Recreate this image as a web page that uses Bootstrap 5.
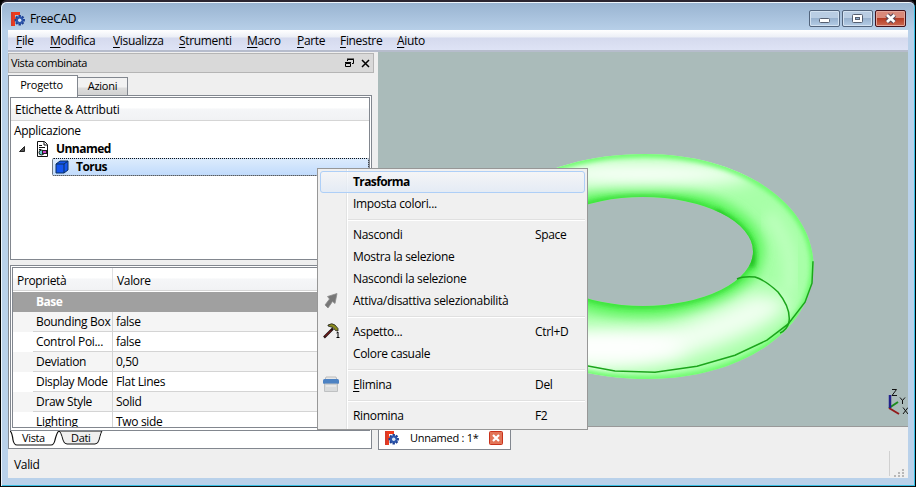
<!DOCTYPE html>
<html lang="it">
<head>
<meta charset="utf-8">
<title>FreeCAD</title>
<link href="https://cdn.jsdelivr.net/npm/bootstrap@5.3.0/dist/css/bootstrap.min.css" rel="stylesheet">
<style>
*{box-sizing:border-box}
html,body{margin:0;height:487px;overflow:hidden;background:#000}
body{font:12px/16px "Open Sans","Noto Sans",sans-serif;letter-spacing:-.33px;color:#000;white-space:nowrap}
svg{display:block;flex:none}
u{text-underline-offset:2px;text-decoration-thickness:1px}
.win{width:916px;height:487px;border:1px solid #000;border-top:2px solid #2b2530;border-bottom-color:#111;border-radius:7px 7px 0 0;background:#b9d1ea;box-shadow:inset 1px 1px #eef5fc,inset -1px -1px #37bfe4;padding:0 7px 7px}
.titlebar{height:27px;margin:1px -6px 0;padding:0 8px 0 8px;background:linear-gradient(#99b4d1,#b7cfe8);border-radius:5px 5px 0 0}
.titlebar .cap{margin-left:4px;padding-top:4px}
.fw-bold{letter-spacing:-.55px}
.wbtn{width:31px;height:17px;border:1px solid #52647c;border-radius:2px;box-shadow:inset 0 0 0 1px #d3e2f1;background:linear-gradient(#b9cde3 48%,#98b2cf 50%,#b5cde6);margin-left:2px}
.wbtn.x{border-color:#43101a;box-shadow:inset 0 0 0 1px #e3a69b;background:linear-gradient(#d9897a 48%,#b53b24 50%,#cc6a52)}
.client{height:448px;background:#efefef}
.menus{height:22px;background:linear-gradient(#fff 0,#eceff6 7px,#d5daee 8px,#dee3f5 20px);border-bottom:2px solid #b6bccc;gap:0}
.menus span{display:block;line-height:20px;padding-top:1px}
.left{width:370px;height:398px;padding-top:1px}
.docktitle{width:366px;height:20px;border:1px solid #b5b5b5;background:#d9d9d9;padding:0 0 0 2px;font-size:11px;letter-spacing:-.4px}
.tabrow{height:24px;padding-top:2px;width:364px}
.ptab{border:1px solid #82878f;border-bottom:0;font-size:11px;text-align:center}
.ptab.on{width:70px;height:22px;background:#fff;line-height:18px;letter-spacing:-.2px;padding-right:3px}
.ptab.off{width:51px;height:20px;margin:2px 0 0 -1px;background:linear-gradient(#f2f2f2 45%,#dcdcdc 55%,#cfcfcf);line-height:16px;letter-spacing:-.25px}
.pane{width:364px;height:354px;margin-top:-2px;background:#fff;border:1px solid #82878f;padding:1px;position:relative}
.treebox{width:360px;height:163px;border:1px solid #82878f;background:#fff}
.thead1{height:23px;background:linear-gradient(#fff 45%,#f5f6f8 50%,#f1f2f4);border-bottom:1px solid #d5d5d5;padding:4px 0 0 4px;letter-spacing:-.27px;margin-bottom:1px}
.trow{height:18px;line-height:18px}
.selrow{height:18px;margin-left:41px;border:1px dotted #111;border-radius:2px;background:linear-gradient(#dcebfc,#c1dbfc);line-height:16px;width:317px}
.gapbar{height:5px;background:#efefef}
.propouter{height:166px;border:1px solid #82878f;background:#fff;padding:1px}
.propinner{height:161px;border:1px solid #82878f;overflow:hidden}
.phead{height:23px;background:linear-gradient(#fff 45%,#f5f6f8 50%,#f1f2f4);border-bottom:1px solid #d5d5d5}
.phead .c1{width:100px;border-right:1px solid #dfe0e2;padding:5px 0 0 4px}
.phead .c2{padding:5px 0 0 4px}
.pbase{height:20px;margin-top:1px;background:#a0a0a0;color:#fff;font-weight:700;padding-left:23px;line-height:20px;letter-spacing:-.5px}
.prow{height:20px;line-height:20px}
.prow.alt{background:#f5f5f5}
.prow .ind{width:20px}
.prow .k{width:80px;padding-left:3px;border-right:1px solid #d4d4d4;border-bottom:1px solid #d4d4d4;overflow:hidden}
.prow .v{padding-left:3px;border-bottom:1px solid #d4d4d4}
.ftabs{height:17px}
.view{width:530px;height:375px;background:#aabbba;border-bottom:1px solid #999}
.mditab{width:133px;height:23px;background:#fff;border:1px solid #82878f;border-top:0;padding:0 12px 0 6px;font-size:11px;letter-spacing:-.25px}
.status{height:28px;padding-left:6px;line-height:30px}
.ctx{position:absolute;left:317px;top:168px;width:271px;height:262px;border:1px solid #979797;border-radius:0;background:linear-gradient(90deg,#f0f0f0 28px,#e2e3e3 28px,#e2e3e3 29px,#fff 29px,#fff 30px,#f0f0f0 30px);padding:2px;margin:0;min-width:0;font-size:12px;color:#000;box-shadow:none;display:block}
.ctx .it{height:22px;line-height:19px;border:1px solid transparent}
.ctx .hot{border:1px solid #aecff7;border-radius:3px;background:linear-gradient(rgba(247,248,250,.6),rgba(225,234,246,.8));font-weight:700;line-height:20px;letter-spacing:-.62px}
.ctx .ic{width:32px;height:20px;padding-left:2px}
.ctx .lab{width:182px}
.ctx .sp{height:9px;padding:4px 0 0 28px}
.ctx .sp div{height:2px;background:#e0e0e0;border-bottom:1px solid #fff}
</style>
<script src="https://cdn.jsdelivr.net/npm/bootstrap@5.3.0/dist/js/bootstrap.bundle.min.js"></script>
</head>
<body>
<svg width="0" height="0" class="position-absolute">
 <symbol id="fc" viewBox="0 0 16 16">
  <path d="M1 1h9v3H5v3h3v3H5v5H1z" fill="#ee3b1c"/>
  <path d="M1 1h2v14H1z" fill="#d63a2a"/>
  <g stroke="#1d3f93" stroke-width="2.4"><path d="M9.700 4v10.400M4.500 9.200h10.400M6 5.500l7.400 7.400M13.400 5.500L6 12.900"/></g>
  <circle cx="9.700" cy="9.200" r="3.600" fill="#2c56ad"/><circle cx="9.700" cy="9.200" r="1.700" fill="#dbe6f5"/>
 </symbol>
</svg>
<div class="win">
 <header class="titlebar d-flex">
  <svg width="16" height="16" class="mt-2"><use href="#fc"/></svg>
  <span class="cap align-self-center">FreeCAD</span>
  <div class="ms-auto d-flex" style="padding-top:7px">
   <div class="wbtn"><svg width="29" height="15"><rect x="9.500" y="7.500" width="10" height="4" rx="1" fill="#fff" stroke="#555f70"/></svg></div>
   <div class="wbtn"><svg width="29" height="15"><rect x="9.500" y="3.500" width="10" height="8" rx="1" fill="#fff" stroke="#555f70"/><rect x="12.500" y="6.500" width="4" height="2" fill="#8fadd0" stroke="#555f70"/></svg></div>
   <div class="wbtn x"><svg width="29" height="15"><path d="M11 4l7.500 7M18.500 4L11 11" stroke="#5b4a59" stroke-width="5"/><path d="M11 4l7.500 7M18.500 4L11 11" stroke="#fff" stroke-width="2.700"/></svg></div>
  </div>
 </header>
 <div class="client">
  <nav class="menus d-flex">
   <span style="width:42px" class="ps-2"><u>F</u>ile</span><span style="width:63px"><u>M</u>odifica</span><span style="width:66px"><u>V</u>isualizza</span><span style="width:68px"><u>S</u>trumenti</span><span style="width:50px"><u>M</u>acro</span><span style="width:43px"><u>P</u>arte</span><span style="width:57px"><u>F</u>inestre</span><span><u>A</u>iuto</span>
  </nav>
  <main class="d-flex">
   <section class="left">
    <div class="docktitle d-flex align-items-center"><span>Vista combinata</span>
     <svg width="30" height="12" class="ms-auto" fill="none" stroke="#000"><path d="M4.500 4V2.500h6v4H9M4 2h7" /><path d="M2.500 6.500h5v3h-5zM2 5.500h6"/><path d="M19 3l7 7M26 3l-7 7" stroke-width="1.500"/></svg></div>
    <div class="tabrow d-flex"><div class="ptab on position-relative z-1">Progetto</div><div class="ptab off">Azioni</div></div>
    <div class="pane">
     <div class="treebox">
      <div class="thead1">Etichette &amp; Attributi</div>
      <div class="trow ps-1" style="margin-left:-1px">Applicazione</div>
      <div class="trow d-flex align-items-center fw-bold">
       <svg width="45" height="18"><path d="M8.500 11.500h5V6.500z" fill="#555" stroke="#222"/><path d="M26.500 1.500h7l3 3v12h-10z" fill="#fff" stroke="#111"/><path d="M33 2v3h3M28 5.500h3M28 7.500h6M28 9.500h2" fill="none" stroke="#111"/><circle cx="30.500" cy="12.500" r="2.500" fill="#6cc" stroke="#111"/><rect x="31.500" y="10.500" width="4" height="3" fill="#c4c" stroke="#222"/></svg>
       <span>Unnamed</span></div>
      <div class="selrow d-flex fw-bold"><svg width="23" height="16"><path d="M3 5l4-3h8v9l-4 3H3z" fill="#1556ef" stroke="#0b3160"/><path d="M3 5h8v9M11 5l4-3" fill="none" stroke="#0b3160"/></svg><span>Torus</span></div>
     </div>
     <div class="gapbar"></div>
     <div class="propouter"><div class="propinner">
      <div class="phead d-flex"><div class="c1">Proprietà</div><div class="c2">Valore</div></div>
      <div class="pbase">Base</div>
      <div class="prow alt d-flex"><div class="ind"></div><div class="k">Bounding Box</div><div class="v flex-fill">false</div></div>
      <div class="prow d-flex"><div class="ind"></div><div class="k">Control Poi...</div><div class="v flex-fill">false</div></div>
      <div class="prow alt d-flex"><div class="ind"></div><div class="k">Deviation</div><div class="v flex-fill">0,50</div></div>
      <div class="prow d-flex"><div class="ind"></div><div class="k">Display Mode</div><div class="v flex-fill">Flat Lines</div></div>
      <div class="prow alt d-flex"><div class="ind"></div><div class="k">Draw Style</div><div class="v flex-fill">Solid</div></div>
      <div class="prow d-flex"><div class="ind"></div><div class="k">Lighting</div><div class="v flex-fill">Two side</div></div>
     </div></div>
     <svg class="ftabs" width="110" height="17" font-family="Open Sans" font-size="11" letter-spacing="-.35"><path d="M49 0q2 1 4 9 1 4 4 4h28q3 0 4-4 2-8 3-9z" fill="#efefef" stroke="#111"/><path d="M0 0q2 1 3 9 1 5 4 5h34q3 0 4-5 2-8 4-9" fill="#fff" stroke="#111" stroke-width="1.200"/><text x="12" y="11">Vista</text><text x="61" y="10.500">Dati</text></svg>
    </div>
   </section>
   <section>
    <div class="view">
     <svg width="530" height="374" viewBox="378 52 530 374">
      <defs>
       <filter id="b3" x="-30%" y="-30%" width="160%" height="160%"><feGaussianBlur stdDeviation="2.500"/></filter>
       <filter id="b6" x="-30%" y="-30%" width="160%" height="160%"><feGaussianBlur stdDeviation="6"/></filter>
       <filter id="b9" x="-50%" y="-150%" width="200%" height="400%"><feGaussianBlur stdDeviation="9"/></filter>
       <clipPath id="ring"><path clip-rule="evenodd" d="M470 267C470 195 552 154 645 154C742 154 813.500 204 813.500 266C813.500 330 742 379 648 379C550 379 470 335 470 267zM533 251.500a110 54.500 0 0 0 220 0a110 54.500 0 0 0-220 0z"/></clipPath>
      </defs>
      <g clip-path="url(#ring)">
       <rect x="460" y="150" width="360" height="240" fill="#a8ffa8"/>
       <ellipse cx="643" cy="251.500" rx="111" ry="56" fill="none" stroke="#5cf55c" stroke-width="20" filter="url(#b6)"/>
       <ellipse cx="640" cy="174" rx="115" ry="12" fill="#fff" filter="url(#b9)"/>
       <path d="M500 338Q610 366 690 338T772 296" fill="none" stroke="#f0fff0" stroke-width="34" filter="url(#b9)"/>
       <ellipse cx="605" cy="346" rx="80" ry="15" fill="#fff" filter="url(#b9)"/>
       <path d="M768 215Q798 250 788 292" fill="none" stroke="#bcffbc" stroke-width="14" filter="url(#b6)"/>
       <path d="M470 267C470 195 552 154 645 154C742 154 813.500 204 813.500 266C813.500 330 742 379 648 379C550 379 470 335 470 267z" fill="none" stroke="#66fb66" stroke-width="6" filter="url(#b3)"/>
       <ellipse cx="643" cy="251.500" rx="110" ry="54.500" fill="none" stroke="#2ad82a" stroke-width="4" filter="url(#b3)"/>
       <path d="M715 212Q757 238 751 267" fill="none" stroke="#22c022" stroke-width="7" filter="url(#b3)"/>
      </g>
      <path d="M580 365l8 1 27 5 40 1.200 42-6 38-11 32-15 21-16 17-22 7-19 1-22" fill="none" stroke="#1ca51c" stroke-width="1.500"/>
      <path d="M737 279Q743 276 755 277Q765 280 778 292Q791 308 789 322Q787 330 780 333" fill="none" stroke="#1ca51c" stroke-width="1.500"/>
      <path d="M889 408l9-6" stroke="#1c8b1c" stroke-width="2"/><path d="M889 408l10 6" stroke="#921a1a" stroke-width="2"/><path d="M890 408V395" stroke="#22228c" stroke-width="2.500"/>
      <path d="M892 389.500h4.500l-4.500 6h5M900 397.500l2.500 3 2.500-3M902.500 400v4M903 407.500l5 6.500M908 407.500l-5 6.500" fill="none" stroke="#111"/>
     </svg>
    </div>
    <div class="mditab d-flex align-items-center"><svg width="16" height="16" style="margin-left:-1px"><use href="#fc"/></svg><span style="margin-left:10px">Unnamed : 1*</span>
     <svg width="14" height="14" class="ms-auto" style="margin-right:-5px"><rect x=".5" y=".5" width="13" height="13" rx="1" fill="#e27457" stroke="#c9321b"/><path d="M4 4l6 6M10 4l-6 6" stroke="#fff" stroke-width="2.200"/></svg></div>
   </section>
  </main>
  <footer class="status d-flex"><span>Valid</span>
   <svg width="24" height="28" class="ms-auto"><path d="M5.500 1v25" stroke="#d0d0d0"/><g fill="#b8b8b8"><path d="M18 19h2v2h-2zM18 22h2v2h-2zM14 22h2v2h-2zM10 25h2v2h-2zM14 25h2v2h-2zM18 25h2v2h-2z"/></g></svg></footer>
 </div>
</div>
<div class="dropdown-menu show ctx">
 <div class="it hot d-flex"><span class="ic"></span><span>Trasforma</span></div>
 <div class="it d-flex"><span class="ic"></span><span>Imposta colori...</span></div>
 <div class="sp"><div></div></div>
 <div class="it d-flex"><span class="ic"></span><span class="lab">Nascondi</span><span>Space</span></div>
 <div class="it d-flex"><span class="ic"></span><span>Mostra la selezione</span></div>
 <div class="it d-flex"><span class="ic"></span><span>Nascondi la selezione</span></div>
 <div class="it d-flex"><span class="ic"><svg width="18" height="20"><path d="M4.500 5.500L14 2.500l-2 10-2.500-2L5 17l-3-3 4.500-6z" fill="#777" stroke="#8d8d8d" stroke-width=".8"/></svg></span><span>Attiva/disattiva selezionabilità</span></div>
 <div class="sp"><div></div></div>
 <div class="it d-flex"><span class="ic"><svg width="18" height="20"><path d="M1 15.500l9-9" stroke="#201010" stroke-width="2.500"/><path d="M2 14.500l6-6" stroke="#a22"/><path d="M5 3q4-2.500 7 0l3 3.500v2.500l-2.500-.5L10 5.500 5 4z" fill="#8a8a1e" stroke="#222" stroke-width=".8"/><path d="M13.500 11l1.500-1v5.500M13.500 15.500h3" fill="none" stroke="#000"/></svg></span><span class="lab">Aspetto...</span><span>Ctrl+D</span></div>
 <div class="it d-flex"><span class="ic"></span><span>Colore casuale</span></div>
 <div class="sp"><div></div></div>
 <div class="it d-flex"><span class="ic"><svg width="18" height="20"><path d="M3 2h10l1 3H2z" fill="#e8e8e8" stroke="#bbb"/><rect x="0" y="4" width="16" height="5" rx="1.500" fill="#4c82c3"/><path d="M1.500 9h13v7.500h-13z" fill="#d9dbdc" stroke="#bfc1c2"/><path d="M3 11h10" stroke="#f4f4f4"/></svg></span><span class="lab"><u>E</u>limina</span><span>Del</span></div>
 <div class="sp"><div></div></div>
 <div class="it d-flex"><span class="ic"></span><span class="lab">Rinomina</span><span>F2</span></div>
</div>
</body>
</html>
